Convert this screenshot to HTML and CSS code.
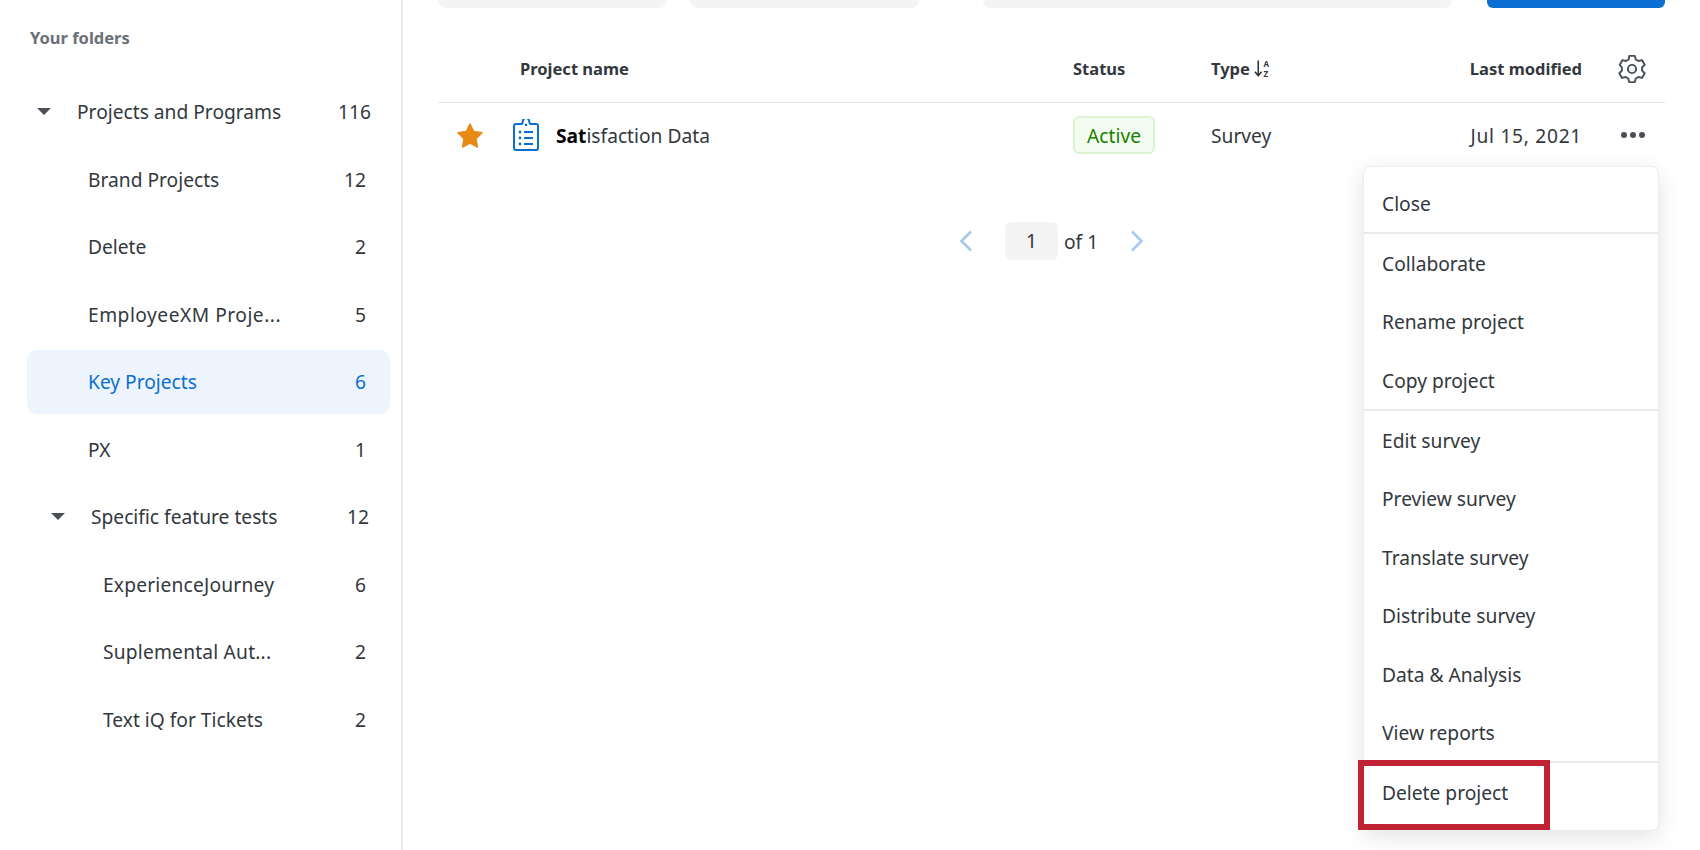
FILE: index.html
```html
<!DOCTYPE html>
<html lang="en">
<head>
<meta charset="utf-8">
<title>Projects</title>
<link rel="stylesheet" href="styles.css">
</head>
<body>
<div class="app">
  <aside class="sidebar">
    <h2 class="side-title">Your folders</h2>
    <ul class="folders">
      <li class="folder lvl0 parent"><svg class="caret" viewBox="0 0 14 7"><path d="M0 0h14L7 7z"/></svg><span class="fname">Projects and Programs</span><span class="count">116</span></li>
      <li class="folder lvl1"><span class="fname">Brand Projects</span><span class="count">12</span></li>
      <li class="folder lvl1"><span class="fname">Delete</span><span class="count">2</span></li>
      <li class="folder lvl1"><span class="fname wide">EmployeeXM Proje...</span><span class="count">5</span></li>
      <li class="folder lvl1 active"><span class="fname">Key Projects</span><span class="count">6</span></li>
      <li class="folder lvl1"><span class="fname">PX</span><span class="count">1</span></li>
      <li class="folder lvl1b parent2"><svg class="caret" viewBox="0 0 14 7"><path d="M0 0h14L7 7z"/></svg><span class="fname">Specific feature tests</span><span class="count">12</span></li>
      <li class="folder lvl2"><span class="fname slight">ExperienceJourney</span><span class="count">6</span></li>
      <li class="folder lvl2"><span class="fname slight">Suplemental Aut...</span><span class="count">2</span></li>
      <li class="folder lvl2"><span class="fname">Text iQ for Tickets</span><span class="count">2</span></li>
    </ul>
  </aside>
  <main class="main">
    <div class="toolbar">
      <div class="tool t1"></div>
      <div class="tool t2"></div>
      <div class="tool t3"></div>
      <div class="tool-btn"></div>
    </div>
    <div class="grid head">
      <span class="c-name">Project name</span>
      <span>Status</span>
      <span class="type-h">Type
        <svg class="sort" viewBox="0 0 18 20"><path d="M4.500 1.500v16M1 13.500l3.500 4.200 3.500-4.200" fill="none" stroke="#32383d" stroke-width="1.700"/><text x="10" y="8" class="sort-l">A</text><text x="10" y="19" class="sort-l">Z</text></svg>
      </span>
      <span class="c-date">Last modified</span>
      <span class="c-act"><svg class="gear" viewBox="0 0 28 28"><path d="M11.600 2.500h4.800l.9 3.200 2.200 1.300 3.200-.8 2.400 4.100-2.300 2.400v2.600l2.300 2.400-2.400 4.100-3.200-.8-2.200 1.300-.9 3.200h-4.800l-.9-3.200-2.200-1.300-3.200.8-2.400-4.100 2.300-2.400v-2.600L3.300 10.300l2.400-4.100 3.200.8 2.200-1.300z" fill="none" stroke="#4a5056" stroke-width="1.700" stroke-linejoin="round"/><circle cx="14" cy="14" r="3.600" fill="none" stroke="#4a5056" stroke-width="1.700"/></svg></span>
    </div>
    <div class="grid row">
      <span class="c-name proj">
        <svg class="star" viewBox="0 0 26 25"><path d="M13 1l3.700 7.600 8.300 1.200-6 5.900 1.400 8.300-7.400-3.900-7.400 3.900L7 15.700 1 9.800l8.300-1.200z" fill="#e88a17" stroke="#e88a17" stroke-width="1.500" stroke-linejoin="round"/></svg>
        <svg class="clip" viewBox="0 0 26 32"><path d="M9 5H3a2 2 0 0 0-2 2v22a2 2 0 0 0 2 2h20a2 2 0 0 0 2-2V7a2 2 0 0 0-2-2h-6l-1-3a3 3 0 0 0-6 0z" fill="none" stroke="#0b6ed0" stroke-width="2" stroke-linejoin="round"/><g fill="#0b6ed0"><circle cx="13" cy="6" r="1.300"/><circle cx="7" cy="13" r="1.400"/><circle cx="7" cy="19" r="1.400"/><circle cx="7" cy="25" r="1.400"/><rect x="11" y="12" width="9" height="2"/><rect x="11" y="18" width="9" height="2"/><rect x="11" y="24" width="9" height="2"/></g></svg>
        <span class="pname"><b>Sat</b>isfaction Data</span>
      </span>
      <span><span class="badge">Active</span></span>
      <span>Survey</span>
      <span class="c-date digits">Jul 15, 2021</span>
      <span class="c-act dots"><i></i><i></i><i></i></span>
    </div>
    <div class="pager">
      <svg class="chev" viewBox="0 0 14 22"><path d="M12 1.500L2.500 11l9.500 9.500" fill="none" stroke="#a4c8f0" stroke-width="2.500"/></svg>
      <span class="page">1</span>
      <span class="of">of 1</span>
      <svg class="chev" viewBox="0 0 14 22"><path d="M2 1.500l9.500 9.500L2 20.500" fill="none" stroke="#a4c8f0" stroke-width="2.500"/></svg>
    </div>
  </main>
</div>
<div class="menu">
  <ul class="sec s-first"><li>Close</li></ul>
  <ul class="sec"><li>Collaborate</li><li>Rename project</li><li>Copy project</li></ul>
  <ul class="sec"><li>Edit survey</li><li>Preview survey</li><li>Translate survey</li><li>Distribute survey</li><li>Data &amp; Analysis</li><li>View reports</li></ul>
  <ul class="sec s-last"><li>Delete project</li></ul>
</div>
<div class="highlight"></div>
</body>
</html>
```
FILE: styles.css
```css
* { box-sizing: border-box; }
html, body { margin: 0; height: 100%; overflow: hidden; background: #fff; }
body { font-family: "Noto Sans", "Open Sans", sans-serif; font-size: 19.200px; color: #32383d; }
ul { list-style: none; margin: 0; padding: 0; }

.app { display: flex; height: 850px; }

.sidebar { width: 403px; flex: none; border-right: 2px solid #e8e9ea; padding-top: 27px; }
.side-title { margin: 0 0 0 30px; font-size: 16.500px; line-height: 22px; font-weight: 700; color: #6b7076; }
.folders { margin: 30.500px 0 0 27px; width: 363px; display: flex; flex-direction: column; gap: 3.500px; }
.folder { height: 64px; display: flex; align-items: center; border-radius: 10px; padding-right: 24px; }
.fname { flex: 1; white-space: nowrap; }
.wide { letter-spacing: .5px; }
.slight { letter-spacing: .2px; }
.lvl1 { padding-left: 61px; }
.lvl2 { padding-left: 76px; }
.lvl0 { padding-left: 10px; padding-right: 19px; }
.lvl1b { padding-left: 24px; padding-right: 21px; }
.caret { width: 14px; height: 7px; fill: #4a5056; margin-right: 26px; flex: none; }
.active { background: #edf4fd; color: #0b6ed0; }

.main { flex: 1; min-width: 0; padding: 0 35px; }
.toolbar { display: flex; height: 8px; }
.tool { background: #f4f4f4; border-radius: 0 0 8px 8px; }
.t1 { width: 229px; margin-right: 23px; }
.t2 { width: 229px; margin-right: 64px; }
.t3 { width: 469px; margin-right: 35px; }
.tool-btn { width: 178px; background: #0b6ed0; border-radius: 0 0 6px 6px; }

.grid { display: grid; grid-template-columns: 635px 138px 1fr 112px 83px; align-items: center; }
.head { height: 95px; border-bottom: 1px solid #e2e3e4; font-size: 16.500px; font-weight: 700; padding-top: 27px; }
.head .c-name { padding-left: 82px; }
.type-h { display: flex; align-items: center; gap: 4px; }
.sort { width: 17px; height: 19px; overflow: visible; }
.sort-l { font-size: 8.500px; font-weight: 700; fill: #32383d; }
.c-date { white-space: nowrap; justify-self: end; }
.digits { letter-spacing: .7px; }
.c-act { justify-self: end; display: flex; align-items: center; padding-right: 17px; }
.gear { width: 32px; height: 32px; }
.row { height: 64px; }
.proj { display: flex; align-items: center; }
.star { width: 26px; height: 25px; margin-left: 19px; }
.clip { width: 26px; height: 32px; margin-left: 30px; }
.pname { margin-left: 17px; white-space: nowrap; }
.pname b { color: #000; }
.badge { display: inline-block; width: 82px; height: 38px; line-height: 35px; text-align: center; color: #198000; background: #f3fcf0; border: 2px solid #dcf3d3; border-radius: 6px; }
.dots { gap: 3px; padding-right: 20px; }
.dots i { width: 6px; height: 6px; border-radius: 50%; background: #4a5056; display: block; }

.pager { display: flex; align-items: center; height: 38px; margin: 55px 0 0 521px; }
.chev { width: 14px; height: 22px; }
.page { width: 53px; height: 38px; line-height: 38px; text-align: center; background: #f4f4f4; border-radius: 6px; margin: 0 6px 0 32px; }
.of { width: 39px; margin-right: 27px; }

.menu { position: absolute; left: 1364px; top: 167px; width: 294px; height: 663px; background: #fff; border-radius: 6px; box-shadow: 0 0 0 1px #eceded, 0 6px 24px rgba(0,0,0,.12); }
.sec { border-bottom: 2px solid #e9eaeb; }
.sec li { height: 58.400px; line-height: 59.500px; padding-left: 18px; }
.s-first { padding-top: 6.500px; }
.s-last { border-bottom: 0; }
.highlight { position: absolute; left: 1358px; top: 760px; width: 192px; height: 70px; border: 6px solid #c02233; }
```
